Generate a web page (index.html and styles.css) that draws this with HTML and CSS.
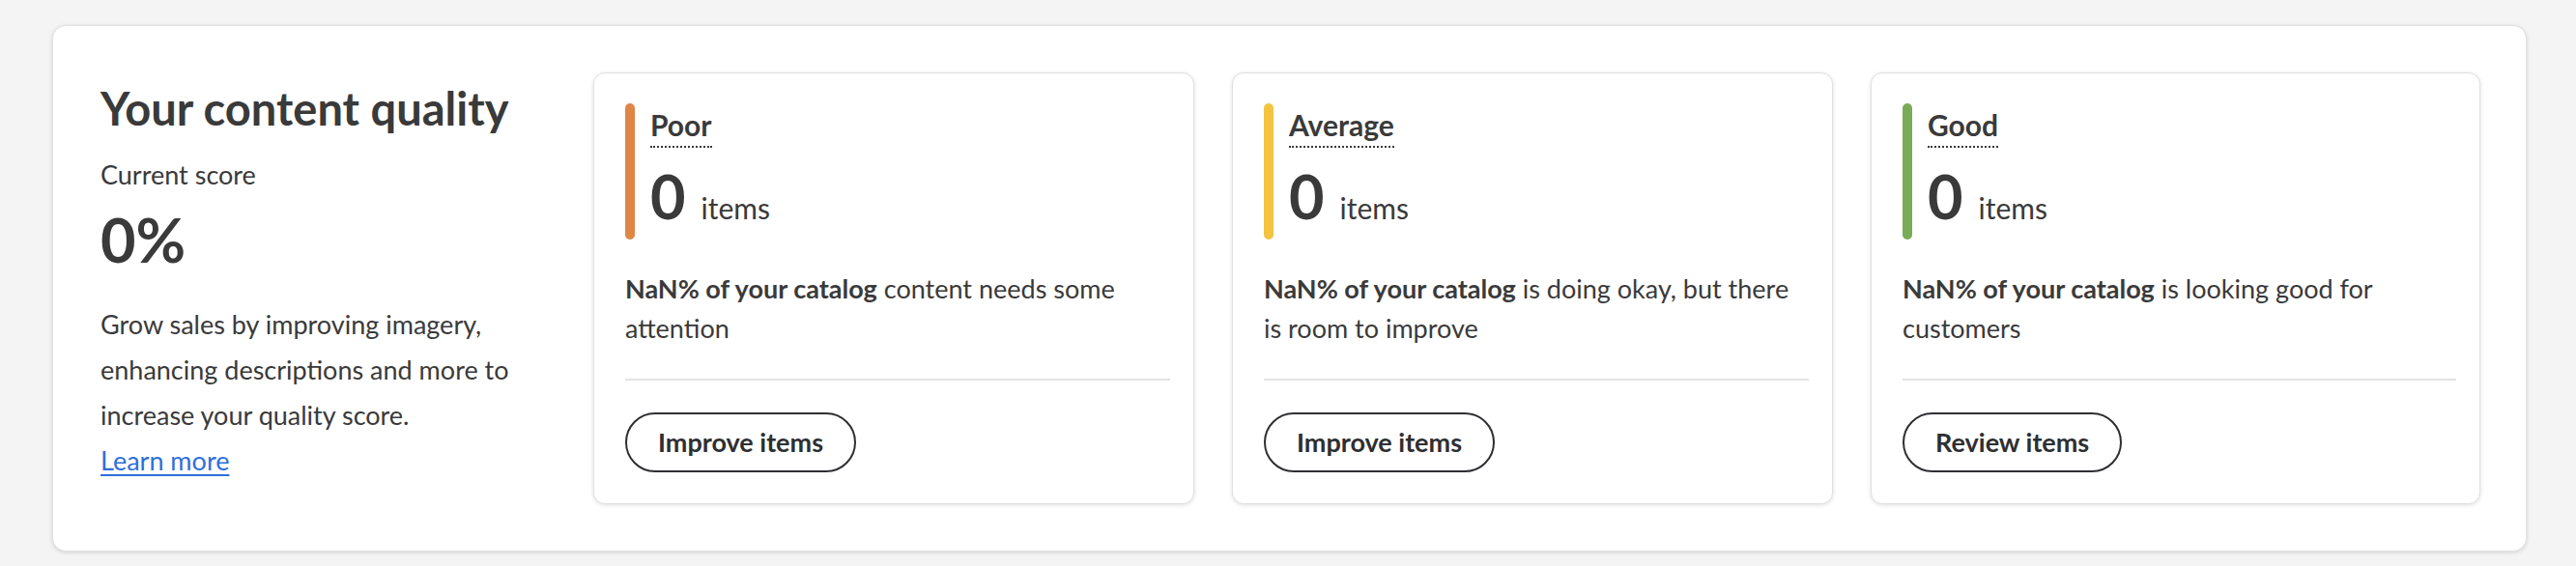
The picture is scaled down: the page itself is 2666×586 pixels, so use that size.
FILE: index.html
```html
<!DOCTYPE html>
<html lang="en">
<head>
<meta charset="utf-8">
<title>Your content quality</title>
<link rel="stylesheet" href="styles.css">
</head>
<body>
<div class="page">
  <section class="panel">
    <div class="summary">
      <h2 class="summary-title">Your content quality</h2>
      <div class="summary-label">Current score</div>
      <div class="summary-score">0%</div>
      <p class="summary-text">Grow sales by improving imagery, enhancing descriptions and more to increase your quality score.<a class="summary-link" href="#">Learn more</a></p>
    </div>

    <div class="tier">
      <div class="tier-head">
        <span class="tier-bar tier-bar--poor"></span>
        <div class="tier-info">
          <span class="tier-label">Poor</span>
          <div class="tier-count"><span class="tier-num">0</span><span class="tier-unit">items</span></div>
        </div>
      </div>
      <p class="tier-desc"><b class="tier-strong">NaN% of your catalog</b> <span class="tier-rest">content needs some attention</span></p>
      <hr class="tier-rule">
      <button class="tier-btn" type="button">Improve items</button>
    </div>

    <div class="tier">
      <div class="tier-head">
        <span class="tier-bar tier-bar--avg"></span>
        <div class="tier-info">
          <span class="tier-label">Average</span>
          <div class="tier-count"><span class="tier-num">0</span><span class="tier-unit">items</span></div>
        </div>
      </div>
      <p class="tier-desc"><b class="tier-strong">NaN% of your catalog</b> <span class="tier-rest">is doing okay, but there is room to improve</span></p>
      <hr class="tier-rule">
      <button class="tier-btn" type="button">Improve items</button>
    </div>

    <div class="tier">
      <div class="tier-head">
        <span class="tier-bar tier-bar--good"></span>
        <div class="tier-info">
          <span class="tier-label">Good</span>
          <div class="tier-count"><span class="tier-num">0</span><span class="tier-unit">items</span></div>
        </div>
      </div>
      <p class="tier-desc"><b class="tier-strong">NaN% of your catalog</b> <span class="tier-rest">is looking good for customers</span></p>
      <hr class="tier-rule">
      <button class="tier-btn" type="button">Review items</button>
    </div>
  </section>
</div>
</body>
</html>
```

FILE: styles.css
```css
* { box-sizing: border-box; }

html, body {
  margin: 0;
  padding: 0;
  background: #f4f4f4;
}

body {
  font-family: Lato, "Noto Sans", "Liberation Sans", sans-serif;
  color: #2e2f32;
  width: 2666px;
  height: 586px;
  overflow: hidden;
}

.page {
  padding: 26px 51px 16px 54px;
}

.panel {
  display: grid;
  grid-template-columns: 471px 622px 622px 1fr;
  column-gap: 39px;
  align-items: start;
  background: #fff;
  border: 1px solid #e2e2e2;
  border-radius: 14px;
  box-shadow: 0 1px 4px rgba(0, 0, 0, 0.14);
  padding: 48px 47px 47px 49px;
  height: 545px;
}

/* left summary */
.summary-title {
  margin: 9px 0 0;
  font-size: 47px;
  line-height: 56px;
  font-weight: 700;
  color: #3a3a3a;
  white-space: nowrap;
}

.summary-label {
  margin-top: 21px;
  font-size: 27px;
  line-height: 40px;
  color: #3a3a3a;
}

.summary-score {
  margin-top: 11px;
  font-size: 63px;
  line-height: 72px;
  font-weight: 700;
  color: #3a3a3a;
}

.summary-text {
  margin: 28px 0 0;
  font-size: 27px;
  line-height: 47px;
  color: #3a3a3a;
}

.summary-link {
  display: block;
  color: #2e6fdb;
  text-decoration: underline;
  text-decoration-thickness: 2px;
  text-underline-offset: 4px;
}

/* tier cards */
.tier {
  background: #fff;
  border: 1px solid #e0e0e0;
  border-radius: 12px;
  box-shadow: 0 1px 4px rgba(0, 0, 0, 0.13);
  padding: 31px 24px 32px 32px;
}

.tier-head {
  display: flex;
  align-items: stretch;
}

.tier-bar {
  flex: 0 0 10px;
  width: 10px;
  border-radius: 5px;
}
.tier-bar--poor { background: #df8545; }
.tier-bar--avg { background: #f4c440; }
.tier-bar--good { background: #7aab57; }

.tier-info {
  display: flex;
  flex-direction: column;
  align-items: flex-start;
  padding: 7px 0 9px 16px;
}

.tier-label {
  display: block;
  font-size: 30px;
  line-height: 30px;
  font-weight: 700;
  color: #3a3a3a;
  padding-bottom: 7px;
  border-bottom: 2px dotted #3a3a3a;
}

.tier-count {
  margin-top: 14px;
  display: flex;
  align-items: baseline;
  height: 72px;
  line-height: 72px;
}

.tier-num {
  font-size: 63px;
  font-weight: 700;
  color: #3a3a3a;
}

.tier-unit {
  margin-left: 16px;
  font-size: 30px;
  color: #3a3a3a;
}

.tier-desc {
  margin: 30px 0 0;
  font-size: 27px;
  line-height: 41px;
  color: #3a3a3a;
}

.tier-strong {
  font-weight: 700;
}

.tier-rule {
  margin: 32px 0 0;
  border: 0;
  height: 2px;
  background: #e3e3e3;
}

.tier-btn {
  margin-top: 33px;
  height: 62px;
  padding: 0 32px;
  border: 2px solid #2e2f32;
  border-radius: 31px;
  background: #fff;
  font-family: inherit;
  font-size: 27px;
  font-weight: 700;
  color: #2e2f32;
  line-height: 58px;
  cursor: pointer;
}
```
